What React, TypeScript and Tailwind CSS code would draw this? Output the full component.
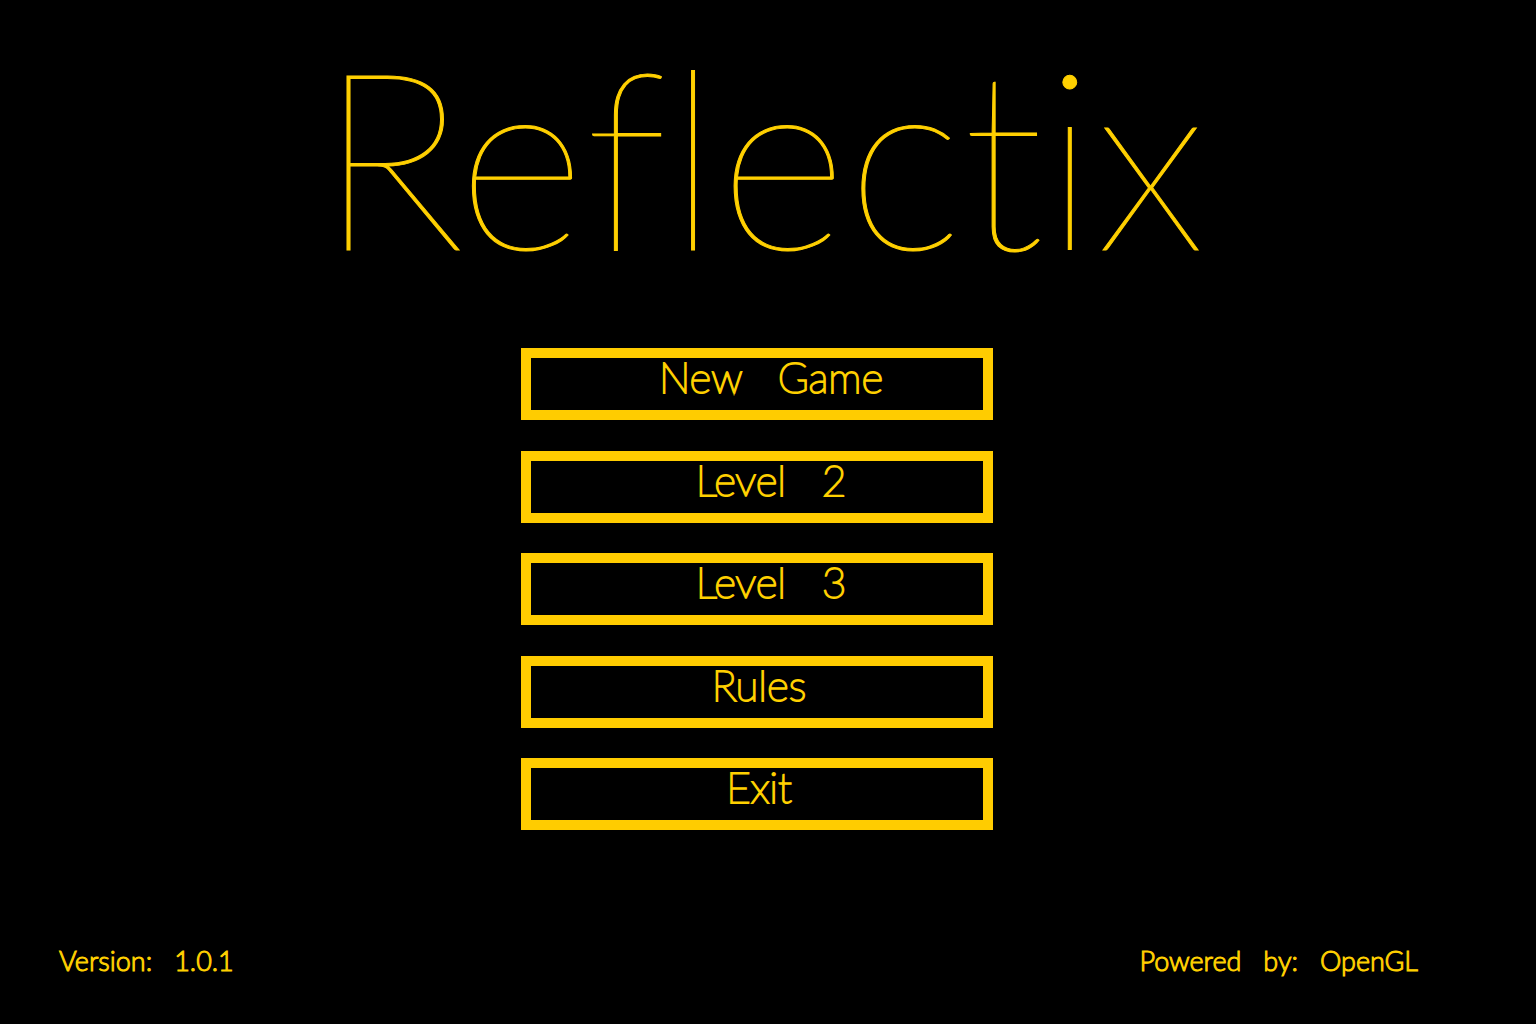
const menuItems = ['New   Game', 'Level   2', 'Level   3', 'Rules', 'Exit'];

const MenuButton = ({ label }: { label: string }) => (
  <button
    type="button"
    className={`flex h-[72px] w-full items-start justify-center border-10 border-[#ffcc00] text-[42px] leading-[38px] font-thin whitespace-pre [-webkit-text-stroke:2px_#ffd000] hover:bg-[#332900] ${
      label.includes(' ') ? 'pl-7' : 'pl-1'
    }`}
  >
    {label}
  </button>
);

export default function App() {
  return (
    <div className="flex min-h-screen flex-col bg-black font-['Lato','Open_Sans',sans-serif] text-[#ffd000] [font-variant-ligatures:none] [-webkit-text-stroke:1px_#ffd000]">
      <h1 className="pt-[30px] pr-3 text-center text-[248px] leading-[248px] font-thin">Reflectix</h1>
      <main className="flex justify-center pt-[70px] pr-[22px]">
        <nav className="flex h-[482px] w-[472px] flex-col justify-between">
          {menuItems.map((label) => (
            <MenuButton key={label} label={label} />
          ))}
        </nav>
      </main>
      <footer className="mt-auto flex justify-between pr-[118px] pb-[45px] pl-[59px] text-[27px] leading-[36px] font-light whitespace-pre">
        <span>Version:   1.0.1</span>
        <span>Powered   by:   OpenGL</span>
      </footer>
    </div>
  );
}
